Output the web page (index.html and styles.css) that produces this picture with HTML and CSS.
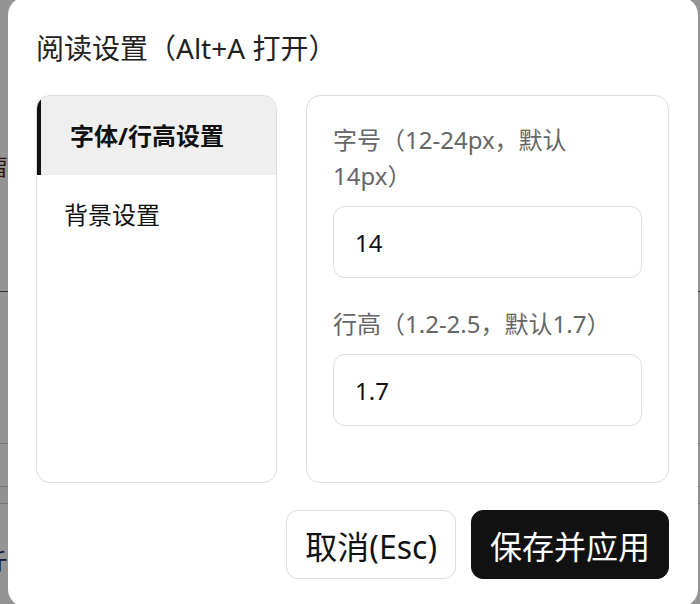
FILE: index.html
```html
<!DOCTYPE html>
<html lang="zh-CN">
<head>
<meta charset="utf-8">
<title>阅读设置</title>
<link rel="stylesheet" href="styles.css">
</head>
<body>
<div class="page">
  <div class="bg-block b1"><span class="frag semi">；</span></div>
  <div class="bg-block b2"><span class="frag red">畱</span></div>
  <div class="bg-block b3"></div>
  <div class="bg-block b4"></div>
  <div class="bg-block b5"></div>
  <div class="bg-block b6"><span class="frag navy">斤</span></div>
</div>
<div class="overlay">
  <div class="dialog">
    <h2 class="title">阅读设置（Alt+A 打开）</h2>
    <div class="body">
      <nav class="nav">
        <div class="nav-item active">字体/行高设置</div>
        <div class="nav-item">背景设置</div>
      </nav>
      <section class="panel">
        <label class="field">
          <span class="label">字号（12-24px，默认14px）</span>
          <input class="input" type="text" value="14">
        </label>
        <label class="field">
          <span class="label">行高（1.2-2.5，默认1.7）</span>
          <input class="input" type="text" value="1.7">
        </label>
      </section>
    </div>
    <div class="actions">
      <button class="btn">取消(Esc)</button>
      <button class="btn primary">保存并应用</button>
    </div>
  </div>
</div>
</body>
</html>
```
FILE: styles.css
```css
* { box-sizing: border-box; }
html, body { margin: 0; padding: 0; }
body {
  width: 700px;
  height: 604px;
  overflow: hidden;
  background: #fff;
  font-family: "Noto Sans", "Noto Sans CJK SC", sans-serif;
  color: #111;
}

/* background page fragments */
.page { display: flex; flex-direction: column; }
.bg-block { position: relative; }
.b1 { height: 150px; padding-top: 110px; }
.b2 { height: 142px; padding-top: 0; border-bottom: 1px solid #555; }
.b3 { height: 152px; border-bottom: 1px solid #ccc; }
.b4 { height: 43px; border-bottom: 1px solid #ccc; }
.b5 { height: 17px; border-bottom: 1px solid #ccc; background: #fafafa; }
.b6 { height: 100px; padding-top: 40px; }
.frag { display: block; font-size: 22px; line-height: 30px; margin-left: -12px; font-family: "Noto Sans CJK SC", sans-serif; }
.semi { color: #1f3a8a; margin-left: -10px; }
.red { color: #5a1a10; margin-left: -14px; }
.navy { color: #1e2d6b; margin-left: -14px; }

.overlay {
  position: fixed;
  inset: 0;
  background: rgba(0, 0, 0, 0.42);
  display: flex;
  align-items: center;
  justify-content: flex-start;
  padding-left: 8px;
}

.dialog {
  flex: none;
  width: 690px;
  height: 610px;
  background: #fff;
  border-radius: 18px;
  padding: 28px 29px 28px 28px;
  display: flex;
  flex-direction: column;
}

.title {
  margin: 0 0 24px;
  font-size: 28px;
  line-height: 46px;
  font-weight: 400;
  color: #222;
}

.body {
  display: grid;
  grid-template-columns: 241px 1fr;
  gap: 29px;
  height: 388px;
}

.nav {
  border: 1px solid #ddd;
  border-radius: 14px;
  overflow: hidden;
  display: flex;
  flex-direction: column;
}
.nav-item {
  font-size: 24px;
  line-height: 41px;
  padding: 19px 27px;
  color: #111;
}
.nav-item.active {
  background: #efefef;
  border-left: 4px solid #111;
  padding-left: 29px;
  font-weight: 700;
}

.panel {
  border: 1px solid #ddd;
  border-radius: 14px;
  padding: 26px 26px;
  display: flex;
  flex-direction: column;
}
.field { display: flex; flex-direction: column; margin-bottom: 28px; }
.label {
  font-size: 24px;
  line-height: 36px;
  color: #666;
  margin-bottom: 12px;
  padding-right: 24px;
}
.input {
  width: 100%;
  height: 72px;
  border: 1px solid #ddd;
  border-radius: 12px;
  padding: 0 21px;
  font-family: inherit;
  font-size: 24px;
  color: #111;
  background: #fff;
  outline: none;
}

.actions {
  margin-top: 27px;
  display: flex;
  justify-content: flex-end;
  gap: 15px;
}
.btn {
  height: 69px;
  padding: 0 18px;
  border: 1px solid #ddd;
  border-radius: 12px;
  background: #fff;
  color: #111;
  font-family: inherit;
  font-size: 32px;
  cursor: pointer;
}
.btn.primary {
  background: #111;
  border-color: #111;
  color: #fff;
}
```
